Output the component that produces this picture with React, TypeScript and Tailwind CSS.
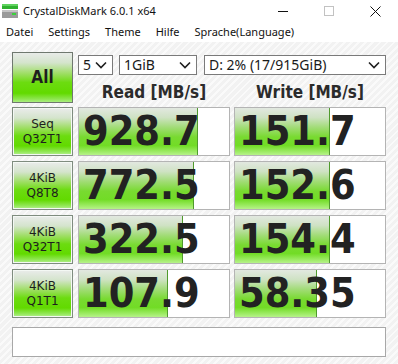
import React from "react";

const rows = [
  { l1: "Seq", l2: "Q32T1", read: "928.7", readW: 119, write: "151.7", writeW: 95 },
  { l1: "4KiB", l2: "Q8T8", read: "772.5", readW: 115, write: "152.6", writeW: 95 },
  { l1: "4KiB", l2: "Q32T1", read: "322.5", readW: 104, write: "154.4", writeW: 95 },
  { l1: "4KiB", l2: "Q1T1", read: "107.9", readW: 89, write: "58.35", writeW: 82 },
];

const uiFont = "font-['Noto_Sans','Open_Sans',sans-serif]";
const cdmFont = "font-['DejaVu_Sans_Condensed','DejaVu_Sans',sans-serif]";

const labelBg =
  "bg-[linear-gradient(to_bottom,#e8ebe8_0%,#d4e4cc_20%,#9ede64_42%,#6cdc10_60%,#62da00_82%,#8ee650_94%,#aaee80_100%)]";
const barBg =
  "bg-[linear-gradient(to_bottom,#e2e8e0_0%,#cfe2c4_20%,#a0dc74_42%,#78da30_62%,#72dc26_80%,#9aea60_92%,#b6f28a_100%)]";

const Chevron = () => (
  <svg width="12" height="8" viewBox="0 0 12 8" className="shrink-0">
    <polyline points="1,1.5 6,6.5 11,1.5" fill="none" stroke="#1f1f1f" strokeWidth="1.6" />
  </svg>
);

const Select = ({ text, className }: { text: string; className: string }) => (
  <div
    className={`h-[20px] flex items-center justify-between pl-[4px] pr-[5px] bg-white border border-[#7a7a7a] text-[14px] text-[#1a1a1a] leading-none ${uiFont} ${className}`}
  >
    <span>{text}</span>
    <Chevron />
  </div>
);

const Score = ({ value, width }: { value: string; width: number }) => (
  <div className="relative w-[152px] h-[49px] bg-white border border-[#b4b4b4] overflow-hidden">
    <div
      className={`absolute left-0 top-0 bottom-0 ${barBg} border-r border-[#4f9a2c]`}
      style={{ width }}
    />
    <div
      className={`relative h-full flex items-center pl-[4px] text-[41px] font-bold text-[#222222] leading-none ${cdmFont}`}
    >
      {value}
    </div>
  </div>
);

export default function App() {
  return (
    <div className="w-[398px] h-[364px] flex flex-col bg-white overflow-hidden">
      {/* title bar */}
      <div className={`h-[22px] flex items-center bg-white ${uiFont}`}>
        <svg width="16" height="16" viewBox="0 0 16 16" className="ml-[2px]">
          <rect x="0" y="1" width="16" height="5" fill="#2fb02f" />
          <rect x="0" y="1" width="16" height="2" fill="#5fd35f" />
          <rect x="0" y="7" width="16" height="8" fill="#9a9a9a" />
          <rect x="0" y="7" width="16" height="2" fill="#c4c4c4" />
          <rect x="10" y="10" width="4" height="2" fill="#3ad23a" />
        </svg>
        <span className="ml-[5px] text-[11px] text-[#111111]">CrystalDiskMark 6.0.1 x64</span>
        <div className="ml-auto flex items-center h-full">
          <div className="w-[46px] h-full flex items-center justify-center">
            <div className="w-[10px] h-px bg-[#111111]" />
          </div>
          <div className="w-[46px] h-full flex items-center justify-center">
            <div className="w-[10px] h-[10px] border border-[#c2c2c2]" />
          </div>
          <div className="w-[46px] h-full flex items-center justify-center">
            <svg width="11" height="11" viewBox="0 0 11 11">
              <path d="M0.5 0.5 L10.5 10.5 M10.5 0.5 L0.5 10.5" stroke="#111111" strokeWidth="1" />
            </svg>
          </div>
        </div>
      </div>

      {/* menu bar */}
      <div className={`h-[20px] flex items-center pl-[6px] gap-[15px] bg-white text-[11px] text-[#111111] ${uiFont}`}>
        <span>Datei</span>
        <span>Settings</span>
        <span>Theme</span>
        <span>Hilfe</span>
        <span>Sprache(Language)</span>
      </div>

      {/* main */}
      <div className="flex-1 flex flex-col pl-[12px] pt-[10px] bg-[repeating-linear-gradient(135deg,#f2f2f2_0px,#f2f2f2_3px,#fafafa_3px,#fafafa_5px)]">
        <div className="flex">
          <div
            className={`w-[61px] h-[51px] flex items-center justify-center border border-[#6f786f] ${labelBg} text-[17px] font-bold text-[#1e1e1e] ${cdmFont}`}
          >
            All
          </div>
          <div className="ml-[5px] w-[308px] flex flex-col">
            <div className="mt-[3px] flex">
              <Select text="5" className="w-[35px]" />
              <Select text="1GiB" className="ml-[6px] w-[78px]" />
              <Select text="D: 2% (17/915GiB)" className="ml-[7px] w-[182px]" />
            </div>
            <div className={`mt-[5px] flex gap-[4px] text-[17px] font-bold text-[#2b2b2b] leading-[24px] ${cdmFont}`}>
              <div className="w-[152px] text-center">Read [MB/s]</div>
              <div className="w-[152px] text-center">Write [MB/s]</div>
            </div>
          </div>
        </div>

        <div className="mt-[3px] flex flex-col gap-[5px]">
          {rows.map((r, i) => (
            <div key={i} className="flex">
              <div className="w-[61px] h-[49px] border border-[#7f8c7f]">
                <div
                  className={`h-full flex flex-col items-center justify-center border border-[#f4f8f4] ${labelBg} text-[12px] leading-[15px] text-[#1e1e1e] font-['DejaVu_Sans',sans-serif]`}
                >
                  <span>{r.l1}</span>
                  <span>{r.l2}</span>
                </div>
              </div>
              <div className="ml-[5px]">
                <Score value={r.read} width={r.readW} />
              </div>
              <div className="ml-[4px]">
                <Score value={r.write} width={r.writeW} />
              </div>
            </div>
          ))}
        </div>

        <div className="mt-[9px] w-[374px] h-[30px] bg-white border border-[#a8a8a8]" />
      </div>
    </div>
  );
}
